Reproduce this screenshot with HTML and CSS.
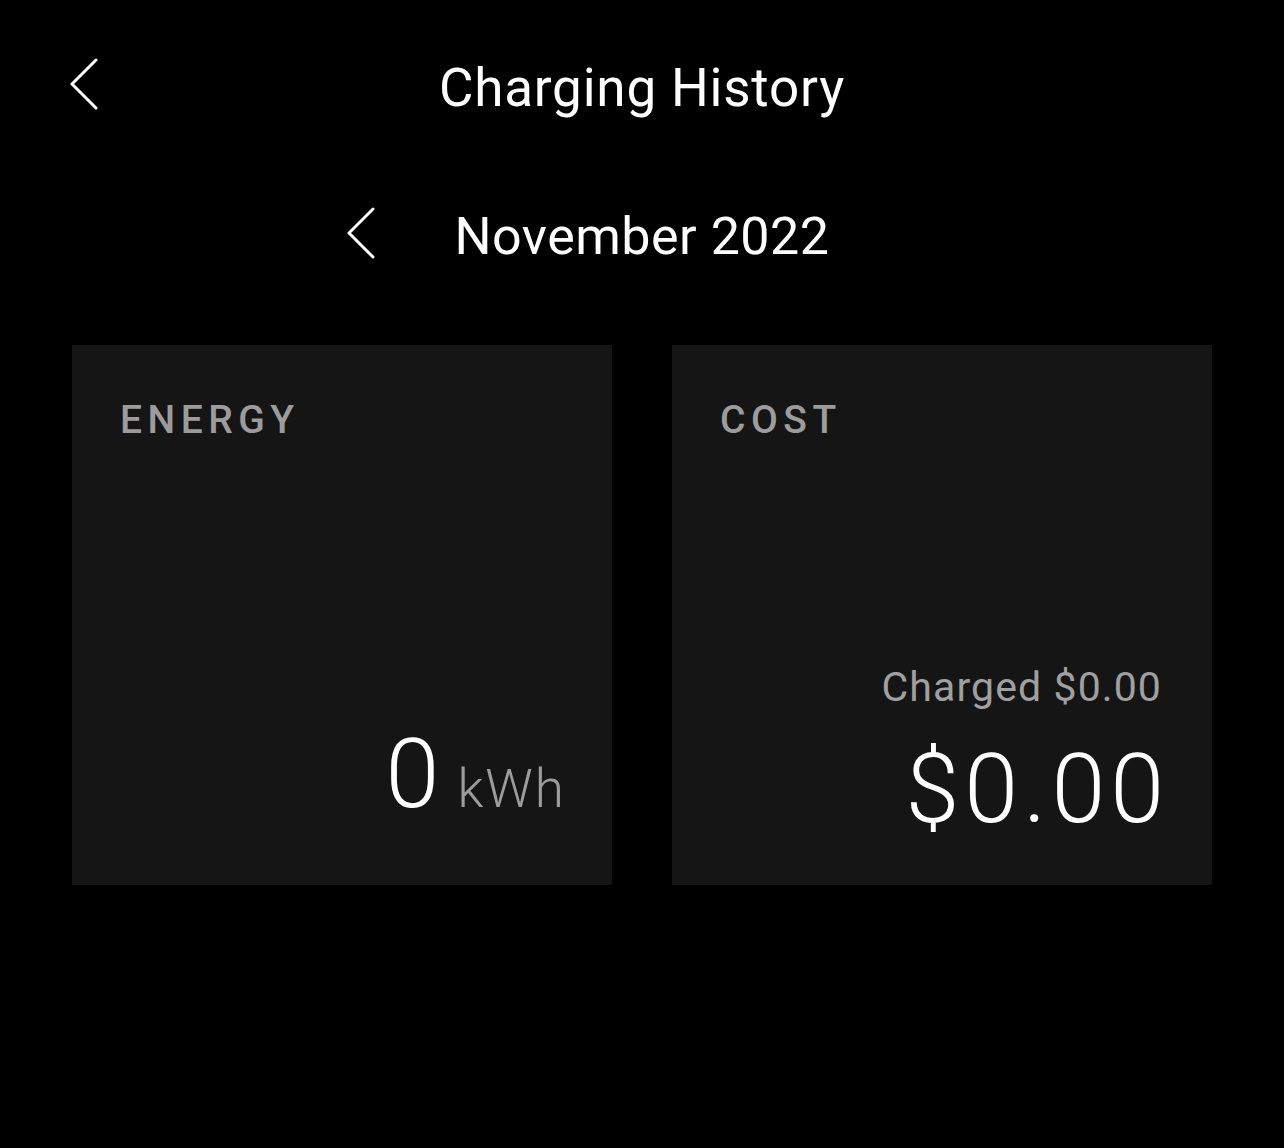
FILE: index.html
```html
<!DOCTYPE html>
<html lang="en">
<head>
  <meta charset="UTF-8">
  <meta name="viewport" content="width=device-width, initial-scale=1.0">
  <title>Charging History</title>
  <link rel="stylesheet" href="styles.css">
</head>
<body>
  <div id="app">
    <!-- Top bar -->
    <header class="top-bar">
      <button class="icon-btn back-btn" type="button" aria-label="Back">
        <svg width="30" height="54" viewBox="0 0 30 54">
          <path d="M26 3 L2 27 L26 51" fill="none" stroke="#fff" stroke-width="3" stroke-linecap="round" stroke-linejoin="round"/>
        </svg>
      </button>
      <h1 class="page-title">Charging History</h1>
      <span></span>
    </header>

    <!-- Month switcher -->
    <div class="month-row">
      <button class="icon-btn prev-btn" type="button" aria-label="Previous month">
        <svg width="30" height="54" viewBox="0 0 30 54">
          <path d="M26 3 L2 27 L26 51" fill="none" stroke="#fff" stroke-width="3" stroke-linecap="round" stroke-linejoin="round"/>
        </svg>
      </button>
      <h2 class="month-label">November 2022</h2>
      <span></span>
    </div>

    <!-- Summary cards -->
    <div class="cards">
      <section class="card">
        <h3 class="card-label">ENERGY</h3>
        <div class="card-bottom">
          <p class="big-value"><span class="num">0</span><span class="unit">kWh</span></p>
        </div>
      </section>

      <section class="card">
        <h3 class="card-label">COST</h3>
        <div class="card-bottom">
          <p class="sub-value">Charged $0.00</p>
          <p class="big-value"><span class="num money">$0.00</span></p>
        </div>
      </section>
    </div>
  </div>
</body>
</html>
```

FILE: styles.css
```css
body {
  margin: 0;
  padding: 0;
  background-color: #000;
  color: #fff;
  font-family: 'Roboto', 'Liberation Sans', sans-serif;
}

#app {
  width: 1284px;
  min-height: 1148px;
}

h1, h2, h3, p {
  margin: 0;
  font-weight: 400;
}

.icon-btn {
  background: none;
  border: none;
  padding: 0;
  cursor: pointer;
  display: block;
}

.icon-btn svg {
  display: block;
}

.top-bar {
  display: grid;
  grid-template-columns: 1fr auto 1fr;
  align-items: start;
  padding-top: 62px;
}

.back-btn {
  justify-self: start;
  margin: -5px 0 0 70px;
}

.page-title {
  font-size: 53px;
  line-height: 53px;
  letter-spacing: 0.8px;
}

.month-row {
  display: grid;
  grid-template-columns: 1fr auto 1fr;
  align-items: start;
  margin-top: 91px;
}

.prev-btn {
  justify-self: end;
  margin-right: 77px;
}

.month-label {
  font-size: 52px;
  line-height: 52px;
  letter-spacing: 0.5px;
  margin-top: 5px;
}

.cards {
  display: grid;
  grid-template-columns: 540px 540px;
  gap: 60px;
  padding: 0 72px;
  margin-top: 82px;
}

.card {
  height: 540px;
  box-sizing: border-box;
  background-color: #151515;
  padding: 56px 48px 47px 48px;
  display: flex;
  flex-direction: column;
  justify-content: space-between;
}

.card-label {
  font-size: 39px;
  line-height: 39px;
  font-weight: 500;
  letter-spacing: 5.5px;
  color: #9c9c9c;
}

.card-bottom {
  text-align: right;
}

.sub-value {
  font-size: 41px;
  line-height: 41px;
  letter-spacing: 1.1px;
  margin-right: 2px;
  color: #a0a0a0;
  margin-bottom: 33px;
}

.big-value {
  display: flex;
  justify-content: flex-end;
  align-items: baseline;
  gap: 18px;
  line-height: 97px;
}

.num {
  font-size: 97px;
  font-weight: 300;
}

.money {
  letter-spacing: 5px;
  margin-right: -5px;
}

.unit {
  font-size: 53px;
  font-weight: 300;
  letter-spacing: 2px;
  margin-right: -2px;
  color: #9c9c9c;
}
```
